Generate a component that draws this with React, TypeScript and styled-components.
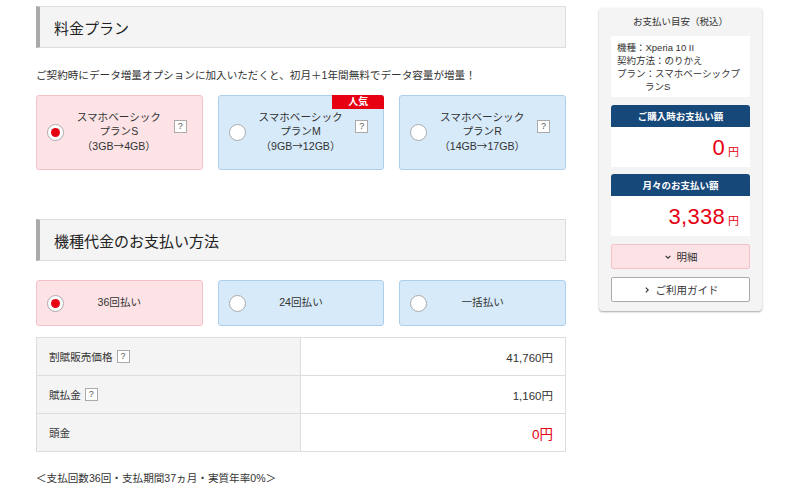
import React from 'react';
import styled, { createGlobalStyle } from 'styled-components';

const GlobalStyle = createGlobalStyle`
  html, body {
    margin: 0;
    padding: 0;
    background: #fff;
  }
  body {
    font-family: "Liberation Sans", "Noto Sans CJK JP", sans-serif;
    color: #333;
  }
  * {
    box-sizing: border-box;
  }
`;

const Page = styled.div`
  display: flex;
  align-items: flex-start;
  gap: 33px;
  padding-left: 36px;
  width: 800px;
`;

const Main = styled.div`
  width: 530px;
  padding-top: 6px;
`;

const SectionHeader = styled.h2<{ $top?: number }>`
  margin: ${({ $top }) => $top ?? 0}px 0 0;
  height: 42px;
  display: flex;
  align-items: center;
  padding-left: 14px;
  background: #f4f4f4;
  border: 1px solid #ddd;
  border-left: 4px solid #aaa;
  font-size: 15px;
  font-weight: 400;
  color: #222;
`;

const Lead = styled.p`
  margin: 20px 0 0;
  font-size: 10.6px;
  line-height: 14px;
  color: #333;
`;

const CardRow = styled.div<{ $top: number }>`
  display: grid;
  grid-template-columns: repeat(3, 1fr);
  gap: 15px;
  margin-top: ${({ $top }) => $top}px;
`;

const Card = styled.div<{ $selected?: boolean; $height: number }>`
  position: relative;
  height: ${({ $height }) => $height}px;
  display: flex;
  align-items: center;
  padding: 0 10px;
  border-radius: 3px;
  background: ${({ $selected }) => ($selected ? '#fde3e6' : '#d7eafa')};
  border: 1px solid ${({ $selected }) => ($selected ? '#f4c2c8' : '#aecfec')};
`;

const Radio = styled.span<{ $checked?: boolean }>`
  flex: none;
  width: 17px;
  height: 17px;
  border-radius: 50%;
  background: #fff;
  border: 1px solid #aaa;
  display: flex;
  align-items: center;
  justify-content: center;

  &::after {
    content: '';
    display: ${({ $checked }) => ($checked ? 'block' : 'none')};
    width: 9px;
    height: 9px;
    border-radius: 50%;
    background: #e60012;
  }
`;

/* $offset keeps the label centred on the whole card when nothing sits on the right */
const CardText = styled.div<{ $offset?: number }>`
  flex: 1;
  margin-right: ${({ $offset }) => $offset ?? 0}px;
  text-align: center;
  font-size: 10.6px;
  line-height: 14.5px;
  color: #333;
  padding-bottom: 2px;
`;

const Arrow = styled.span`
  font-family: "Noto Sans CJK JP", sans-serif;
`;

const Help = styled.span`
  display: inline-flex;
  align-items: center;
  justify-content: center;
  width: 13px;
  height: 13px;
  border: 1px solid #aaa;
  background: #fff;
  font-size: 9px;
  line-height: 1;
  color: #555;
  vertical-align: middle;
`;

const CardHelp = styled(Help)`
  margin-right: 5px;
  margin-bottom: 12px;
`;

const Badge = styled.span`
  position: absolute;
  top: -1px;
  right: -1px;
  width: 52px;
  height: 14px;
  background: #e60012;
  color: #fff;
  font-size: 10px;
  font-weight: 700;
  line-height: 14px;
  text-align: center;
  border-top-right-radius: 3px;
`;

const Table = styled.div`
  margin-top: 11px;
  border: 1px solid #ddd;
  border-bottom: none;
`;

const Row = styled.div`
  display: grid;
  grid-template-columns: 264px 1fr;
  height: 38px;
  border-bottom: 1px solid #ddd;
`;

const Label = styled.div`
  display: flex;
  align-items: center;
  gap: 4px;
  padding-left: 12px;
  background: #f4f4f4;
  border-right: 1px solid #ddd;
  font-size: 10.6px;
  color: #333;
`;

const Value = styled.div<{ $accent?: boolean }>`
  display: flex;
  align-items: center;
  justify-content: flex-end;
  padding-right: 12px;
  font-size: ${({ $accent }) => ($accent ? '13.5px' : '11.5px')};
  color: ${({ $accent }) => ($accent ? '#e60012' : '#333')};
`;

const Note = styled.p`
  margin: 18px 0 0;
  font-size: 10.6px;
  color: #333;
`;

const Sidebar = styled.aside`
  margin-top: 8px;
  width: 163px;
  padding: 7px 12px 9px;
  background: #f4f4f4;
  border-radius: 4px;
  box-shadow: 0 1px 2px rgba(0, 0, 0, 0.35);
`;

const SideTitle = styled.div`
  text-align: center;
  font-size: 9.5px;
  line-height: 14px;
  color: #333;
`;

const InfoBox = styled.div`
  margin-top: 7px;
  background: #fff;
  padding: 5px 6px 4px;
  font-size: 9.5px;
  line-height: 13px;
  color: #333;
`;

const InfoLine = styled.div<{ $hang?: number }>`
  padding-left: ${({ $hang }) => $hang ?? 0}px;
  text-indent: -${({ $hang }) => $hang ?? 0}px;
`;

const PriceHead = styled.div<{ $top: number }>`
  margin-top: ${({ $top }) => $top}px;
  height: 22px;
  display: flex;
  align-items: center;
  justify-content: center;
  background: #17487a;
  color: #fff;
  font-size: 9.5px;
  font-weight: 700;
  border-radius: 3px 3px 0 0;
`;

const PriceBody = styled.div`
  height: 40px;
  display: flex;
  align-items: center;
  justify-content: flex-end;
  padding: 2px 11px 0 0;
  background: #fff;
  color: #e60012;
`;

const Amount = styled.span`
  font-size: 22px;
  letter-spacing: 0.3px;
`;

const Yen = styled.span`
  font-size: 11px;
  margin-left: 3px;
  margin-top: 5px;
`;

const SideButton = styled.div<{ $pink?: boolean; $top: number }>`
  margin-top: ${({ $top }) => $top}px;
  height: 25px;
  display: flex;
  align-items: center;
  justify-content: center;
  gap: 5px;
  border-radius: 2px;
  font-size: 10.5px;
  color: #333;
  background: ${({ $pink }) => ($pink ? '#fde3e6' : '#fff')};
  border: 1px solid ${({ $pink }) => ($pink ? '#f4c2c8' : '#aaa')};

  svg {
    width: 8px;
    height: 8px;
  }
`;

const ChevronDown = () => (
  <svg viewBox="0 0 10 10">
    <path d="M2 3.5 L5 6.5 L8 3.5" fill="none" stroke="#333" strokeWidth="1.4" />
  </svg>
);

const ChevronRight = () => (
  <svg viewBox="0 0 10 10">
    <path d="M3.5 2 L6.5 5 L3.5 8" fill="none" stroke="#333" strokeWidth="1.4" />
  </svg>
);

const plans = [
  { id: 's', name: 'プランS', from: '3GB', to: '4GB', selected: true },
  { id: 'm', name: 'プランM', from: '9GB', to: '12GB', popular: true },
  { id: 'r', name: 'プランR', from: '14GB', to: '17GB' },
];

const payments = [
  { id: '36', label: '36回払い', selected: true },
  { id: '24', label: '24回払い' },
  { id: '1', label: '一括払い' },
];

const App: React.FC = () => {
  return (
    <>
      <GlobalStyle />
      <Page>
        <Main>
          <SectionHeader>料金プラン</SectionHeader>
          <Lead>ご契約時にデータ増量オプションに加入いただくと、初月＋1年間無料でデータ容量が増量！</Lead>
          <CardRow $top={13}>
            {plans.map((plan) => (
              <Card key={plan.id} $selected={plan.selected} $height={75}>
                {plan.popular && <Badge>人気</Badge>}
                <Radio $checked={plan.selected} />
                <CardText>
                  <div>スマホベーシック</div>
                  <div>{plan.name}</div>
                  <div>
                    （{plan.from}
                    <Arrow>→</Arrow>
                    {plan.to}）
                  </div>
                </CardText>
                <CardHelp>?</CardHelp>
              </Card>
            ))}
          </CardRow>

          <SectionHeader $top={49}>機種代金のお支払い方法</SectionHeader>
          <CardRow $top={19}>
            {payments.map((p) => (
              <Card key={p.id} $selected={p.selected} $height={46}>
                <Radio $checked={p.selected} />
                <CardText $offset={17}>{p.label}</CardText>
              </Card>
            ))}
          </CardRow>

          <Table>
            <Row>
              <Label>
                割賦販売価格 <Help>?</Help>
              </Label>
              <Value>41,760円</Value>
            </Row>
            <Row>
              <Label>
                賦払金 <Help>?</Help>
              </Label>
              <Value>1,160円</Value>
            </Row>
            <Row>
              <Label>頭金</Label>
              <Value $accent>0円</Value>
            </Row>
          </Table>
          <Note>＜支払回数36回・支払期間37ヵ月・実質年率0%＞</Note>
        </Main>

        <Sidebar>
          <SideTitle>お支払い目安（税込）</SideTitle>
          <InfoBox>
            <InfoLine>機種：Xperia 10 II</InfoLine>
            <InfoLine>契約方法：のりかえ</InfoLine>
            <InfoLine $hang={28}>プラン：スマホベーシックプランS</InfoLine>
          </InfoBox>

          <PriceHead $top={8}>ご購入時お支払い額</PriceHead>
          <PriceBody>
            <Amount>0</Amount>
            <Yen>円</Yen>
          </PriceBody>

          <PriceHead $top={7}>月々のお支払い額</PriceHead>
          <PriceBody>
            <Amount>3,338</Amount>
            <Yen>円</Yen>
          </PriceBody>

          <SideButton $pink $top={8}>
            <ChevronDown />
            明細
          </SideButton>
          <SideButton $top={8}>
            <ChevronRight />
            ご利用ガイド
          </SideButton>
        </Sidebar>
      </Page>
    </>
  );
};

export default App;
